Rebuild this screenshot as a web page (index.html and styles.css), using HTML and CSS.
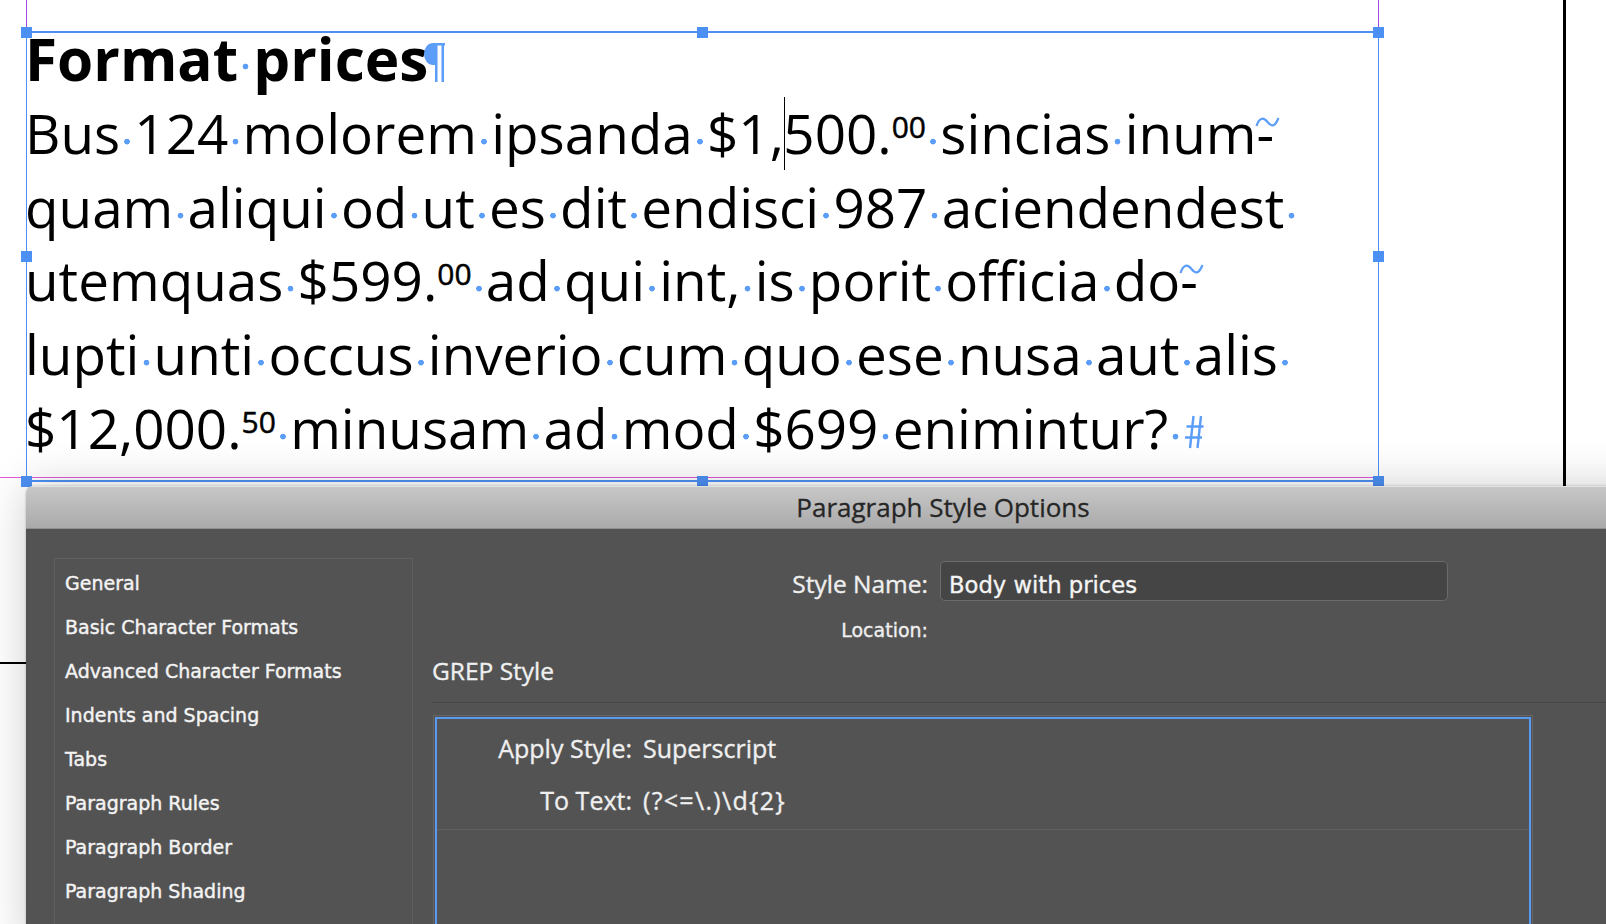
FILE: index.html
```html
<!DOCTYPE html>
<html lang="en">
<head>
<meta charset="utf-8">
<title>Paragraph Style Options</title>
<link rel="stylesheet" href="styles.css">
</head>
<body>
<div class="canvas">
  <div class="guide guide-v guide-left"></div>
  <div class="guide guide-v guide-right"></div>
  <div class="guide guide-h"></div>
  <div class="page-edge page-edge-right"></div>
  <div class="page-edge page-edge-left"></div>

  <div class="frame">
    <div class="story">
      <div class="hd">Format<span class="sp"> </span>prices<svg class="pilcrow" width="21" height="39" viewBox="0 0 21 39"><path d="M11 0H21V2.5H20V39H17.5V2.5H13.5V39H11V22H9A9 11 0 0 1 9 0Z" fill="#5b9df7"/></svg></div>
      <div class="ln">Bus<span class="sp"> </span>124<span class="sp"> </span>molorem<span class="sp"> </span>ipsanda<span class="sp"> </span>$1,<span class="caret"></span>500.<span class="sup">00</span><span class="sp"> </span>sincias<span class="sp"> </span>inum-<svg class="tilde" width="25" height="14" viewBox="0 0 25 14"><path d="M1.5 11C4 3 8 1.5 12.5 7S20 11.5 23.5 3" fill="none" stroke="#5b9df7" stroke-width="2.2"/></svg></div>
      <div class="ln">quam<span class="sp"> </span>aliqui<span class="sp"> </span>od<span class="sp"> </span>ut<span class="sp"> </span>es<span class="sp"> </span>dit<span class="sp"> </span>endisci<span class="sp"> </span>987<span class="sp"> </span>aciendendest<span class="sp"> </span></div>
      <div class="ln">utemquas<span class="sp"> </span>$599.<span class="sup">00</span><span class="sp"> </span>ad<span class="sp"> </span>qui<span class="sp"> </span>int,<span class="sp"> </span>is<span class="sp"> </span>porit<span class="sp"> </span>officia<span class="sp"> </span>do-<svg class="tilde" width="25" height="14" viewBox="0 0 25 14"><path d="M1.5 11C4 3 8 1.5 12.5 7S20 11.5 23.5 3" fill="none" stroke="#5b9df7" stroke-width="2.2"/></svg></div>
      <div class="ln">lupti<span class="sp"> </span>unti<span class="sp"> </span>occus<span class="sp"> </span>inverio<span class="sp"> </span>cum<span class="sp"> </span>quo<span class="sp"> </span>ese<span class="sp"> </span>nusa<span class="sp"> </span>aut<span class="sp"> </span>alis<span class="sp"> </span></div>
      <div class="ln">$12,000.<span class="sup">50</span><span class="sp"> </span>minusam<span class="sp"> </span>ad<span class="sp"> </span>mod<span class="sp"> </span>$699<span class="sp"> </span>enimintur?<span class="sp"> </span><svg class="hash" width="20" height="34" viewBox="0 0 20 34"><path d="M9.5 1L6 33M17 1L13.5 33M2.5 11.5H19.5M1 22.5H18" fill="none" stroke="#5b9df7" stroke-width="2.4"/></svg></div>
    </div>
    <span class="handle h-top h-left"></span>
    <span class="handle h-top h-center"></span>
    <span class="handle h-top h-right"></span>
    <span class="handle h-mid h-left"></span>
    <span class="handle h-mid h-right"></span>
    <span class="handle h-bottom h-left"></span>
    <span class="handle h-bottom h-center"></span>
    <span class="handle h-bottom h-right"></span>
  </div>

  <div class="dialog">
    <div class="titlebar">Paragraph Style Options</div>
    <div class="dlg-body">
      <ul class="nav">
        <li>General</li>
        <li>Basic Character Formats</li>
        <li>Advanced Character Formats</li>
        <li>Indents and Spacing</li>
        <li>Tabs</li>
        <li>Paragraph Rules</li>
        <li>Paragraph Border</li>
        <li>Paragraph Shading</li>
      </ul>
      <div class="main">
        <div class="name-row">
          <span class="lbl">Style Name:</span>
          <div class="input">Body with prices</div>
        </div>
        <div class="loc">Location:</div>
        <div class="sec">GREP Style</div>
        <div class="grep">
          <div class="gitem">
            <div class="grow"><span class="glbl">Apply Style:</span><span class="gval">Superscript</span></div>
            <div class="grow"><span class="glbl">To Text:</span><span class="gval regex">(?&lt;=\.)\d{2}</span></div>
          </div>
        </div>
      </div>
    </div>
  </div>
</div>
</body>
</html>
```
FILE: styles.css
```css
html, body {
  margin: 0;
  padding: 0;
}
body {
  width: 1606px;
  height: 924px;
  overflow: hidden;
  background: #fff;
  font-family: "Open Sans", "Noto Sans", sans-serif;
}
.canvas {
  position: relative;
  width: 1606px;
  height: 924px;
  overflow: hidden;
  background: #fff;
}

/* guides & page edges */
.guide { position: absolute; }
.guide-v { top: 0; width: 1px; height: 32px; background: #a24fe3; }
.guide-left { left: 26px; }
.guide-right { left: 1378px; }
.guide-h { left: 0; top: 477px; width: 1379px; height: 1px; background: #e25ad8; }
.page-edge { position: absolute; background: #000; }
.page-edge-right { left: 1563px; top: 0; width: 3px; height: 486px; }
.page-edge-left { left: 0; top: 662px; width: 26px; height: 2px; }

/* text frame */
.frame {
  position: absolute;
  left: 26px;
  top: 31px;
  width: 1353px;
  height: 451px;
  box-sizing: border-box;
  border-style: solid;
  border-color: #4d90f4;
  border-width: 2px 1px;
}
.story {
  margin-left: -2px;
  color: #000;
  white-space: nowrap;
}
.hd {
  font-weight: 700;
  font-size: 58.5px;
  line-height: 50px;
  height: 50px;
  margin-bottom: 13px;
}
.ln {
  font-size: 54.8px;
  line-height: 73.7px;
  height: 73.7px;
}
.sp {
  white-space: pre;
  background: radial-gradient(circle 3.2px at 50% 46.6px, #5b9df7 2.5px, rgba(91,157,247,0) 3.2px);
}
.hd .sp {
  background: radial-gradient(circle 3.2px at 50% 48.5px, #5b9df7 2.5px, rgba(91,157,247,0) 3.2px);
}
.sup {
  font-size: 30px;
  line-height: 0;
  vertical-align: 16px;
  -webkit-text-stroke: 0.5px #000;
}
.caret {
  display: inline-block;
  width: 0;
  height: 73px;
  border-left: 1.5px solid #000;
  vertical-align: -15.5px;
  margin-right: -1.5px;
}
.tilde {
  vertical-align: 25px;
  margin-left: -19px;
}
.pilcrow {
  vertical-align: -1px;
  margin-left: -4px;
}
.hash {
  vertical-align: 0;
  margin-left: 1px;
}

/* frame handles */
.handle {
  position: absolute;
  width: 11px;
  height: 11px;
  background: #4d90f4;
}
.h-top { top: -6.5px; }
.h-mid { top: calc(50% - 5.5px); }
.h-bottom { bottom: -6.5px; }
.h-left { left: -6px; }
.h-center { left: calc(50% - 5.5px); }
.h-right { right: -6px; }

/* dialog window */
.dialog {
  position: absolute;
  left: 26px;
  top: 486px;
  width: 1834px;
  height: 460px;
  border-radius: 7px 7px 0 0;
  overflow: hidden;
  box-shadow: 0 0 45px rgba(0,0,0,.2), 0 0 2px rgba(0,0,0,.3);
  display: flex;
  flex-direction: column;
}
.titlebar {
  flex: none;
  height: 43px;
  box-sizing: border-box;
  border-top: 1px solid #e2e2e2;
  border-bottom: 1px solid #8f8f8f;
  background: linear-gradient(#c7c7c7, #aaaaaa);
  text-align: center;
  font-size: 26px;
  line-height: 41px;
  color: #262626;
  -webkit-text-stroke: 0.3px #262626;
}
.dlg-body {
  flex: 1;
  display: flex;
  align-items: flex-start;
  background: #535353;
}
.nav {
  flex: none;
  margin: 29px 0 0 28px;
  padding: 2px 0 0 10px;
  width: 359px;
  height: 420px;
  box-sizing: border-box;
  border: 1px solid #606060;
  list-style: none;
  font: 19px/44px "DejaVu Sans", sans-serif;
  color: #f4f4f4;
  -webkit-text-stroke: 0.4px #f4f4f4;
}
.main {
  flex: 1;
  margin-left: 19px;
  padding-top: 32px;
  color: #efefef;
  -webkit-text-stroke: 0.35px #efefef;
}
.name-row {
  display: flex;
  align-items: baseline;
}
.lbl {
  flex: none;
  width: 496px;
  margin-right: 12px;
  text-align: right;
  font-size: 24.5px;
  line-height: 30px;
}
.input {
  flex: none;
  width: 508px;
  height: 40px;
  box-sizing: border-box;
  border: 1px solid #6b6b6b;
  border-radius: 5px;
  background: #454545;
  padding: 8px 8px 0;
  font: 22.7px/30px "DejaVu Sans", sans-serif;
  color: #f6f6f6;
}
.loc {
  width: 496px;
  margin-top: 16px;
  text-align: right;
  font: 19px/26px "DejaVu Sans", sans-serif;
}
.sec {
  margin-top: 13px;
  padding-bottom: 16px;
  border-bottom: 1px solid #474747;
  font-size: 24.5px;
  line-height: 30px;
}
.grep {
  margin: 14px 0 0 3px;
  width: 1096px;
  height: 260px;
  box-sizing: border-box;
  border: 2px solid #5a9af2;
  outline: 1px solid #666;
  outline-offset: 1px;
}
.gitem {
  padding: 13.5px 0 14.5px;
  border-bottom: 1px solid #5f5f5f;
}
.grow {
  display: flex;
  font-size: 25px;
  line-height: 30px;
}
.grow + .grow {
  margin-top: 22px;
}
.glbl {
  flex: none;
  width: 195px;
  margin-right: 11px;
  text-align: right;
}
.regex {
  letter-spacing: 1.3px;
}
```
